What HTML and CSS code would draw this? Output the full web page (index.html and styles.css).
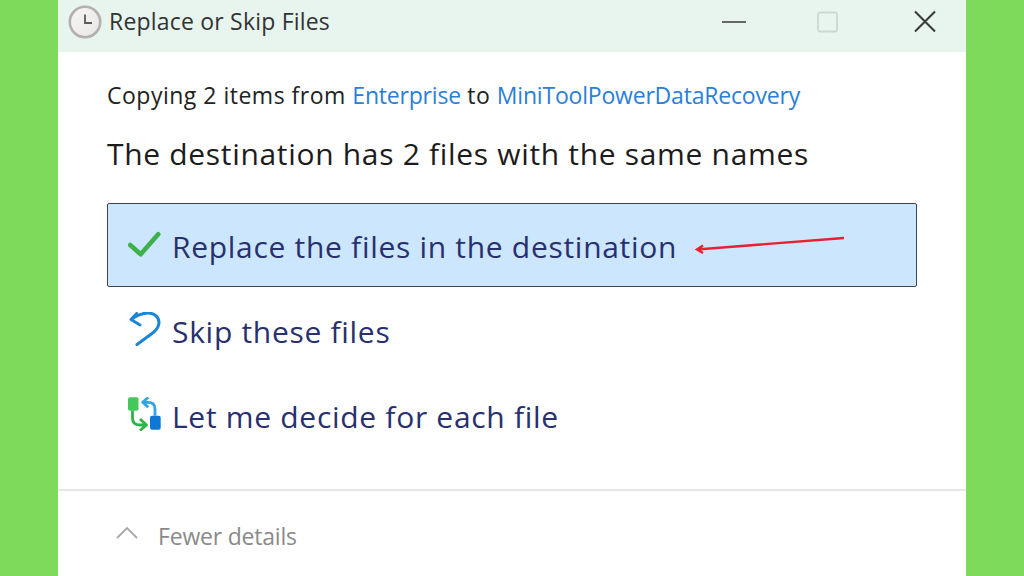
FILE: index.html
```html
<!DOCTYPE html>
<html lang="en">
<head>
<meta charset="utf-8">
<title>Replace or Skip Files</title>
<link rel="stylesheet" href="styles.css">
</head>
<body>
<main class="dialog">
  <header class="titlebar">
    <svg class="clock" viewBox="0 0 34 34" width="34" height="34">
      <defs><linearGradient id="face" x1="0" y1="0" x2="1" y2="1"><stop offset="0" stop-color="#f7f6f5"/><stop offset="1" stop-color="#e9e7e6"/></linearGradient></defs>
      <circle cx="17" cy="17" r="15.2" fill="url(#face)" stroke="#b3b0ae" stroke-width="2.600"/>
      <path d="M17 9.500V18h7" fill="none" stroke="#5a5a5a" stroke-width="1.800"/>
    </svg>
    <span class="title">Replace or Skip Files</span>
    <div class="controls">
      <svg class="ctl ctl-min" viewBox="0 0 24 24" width="24" height="24"><path d="M0 12h24" stroke="#444" stroke-width="1.600"/></svg>
      <svg class="ctl" viewBox="0 0 24 24" width="24" height="24"><rect x="3" y="2.500" width="19" height="19" rx="2" fill="none" stroke="#cfd5d2" stroke-width="1.800"/></svg>
      <svg class="ctl" viewBox="0 0 24 24" width="24" height="24"><path d="M2 1.500l20 20M22 1.500l-20 20" stroke="#3a3a3a" stroke-width="2.100"/></svg>
    </div>
  </header>
  <section class="content">
    <p class="copying">Copying 2 items from <span class="link">Enterprise</span> to <span class="link">MiniToolPowerDataRecovery</span></p>
    <h1 class="heading">The destination has 2 files with the same names</h1>
    <div class="options">
      <div class="option selected">
        <svg class="icon" viewBox="0 0 34 34" width="34" height="34"><path d="M2.200 18l10.500 9.300L30.200 7.300" fill="none" stroke="#3fb14a" stroke-width="4.600" stroke-linecap="round" stroke-linejoin="round"/></svg>
        <span>Replace the files in the destination</span>
        <svg class="arrow" viewBox="0 0 152 18" width="152" height="18"><path d="M150 2L3 13.500M9 9.500L3 13.500l6 3.500" fill="none" stroke="#e8202f" stroke-width="2.400"/></svg>
      </div>
      <div class="option">
        <svg class="icon" viewBox="0 0 34 34" width="34" height="34"><path d="M8.700 1.500L3 7.500l9 5.500M3 7.500C8 4 14 1 20 1C26 1 31 5 31 10.500C31 14 29 17 26 20L9 32.500" fill="none" stroke="#1a86d8" stroke-width="3" stroke-linecap="round" stroke-linejoin="round"/></svg>
        <span>Skip these files</span>
      </div>
      <div class="option">
        <svg class="icon" viewBox="0 0 34 34" width="34" height="34">
          <rect x="0" y="0.300" width="10.500" height="13.500" rx="2" fill="#43c85c"/>
          <path d="M4.500 13.700V21c0 5 2.500 7 7 7h7M12 22l6.500 6-6.500 5.500" fill="none" stroke="#2fb344" stroke-width="2.800" stroke-linejoin="round"/>
          <path d="M27 18.700V12c0-5-2.500-6.700-7-6.700h-5.300M20.300 0.300L14.700 5.300l5.600 5" fill="none" stroke="#2ea6e6" stroke-width="2.800" stroke-linejoin="round"/>
          <rect x="22" y="18.700" width="10.700" height="14" rx="2" fill="#0f78d4"/>
        </svg>
        <span>Let me decide for each file</span>
      </div>
    </div>
  </section>
  <footer class="footer">
    <svg class="chevron" viewBox="0 0 22 14" width="22" height="14"><path d="M1 12L11 2l10 10" fill="none" stroke="#a9a9a9" stroke-width="1.800"/></svg>
    <span>Fewer details</span>
  </footer>
</main>
</body>
</html>
```
FILE: styles.css
```css
* { box-sizing: border-box; }
html, body { margin: 0; height: 100%; }
body {
  background: #7eda5a;
  display: flex;
  justify-content: center;
  overflow: hidden;
  font-family: "Open Sans", "Noto Sans", sans-serif;
}
.dialog {
  width: 908px;
  height: 576px;
  background: #fff;
  display: flex;
  flex-direction: column;
}
.titlebar {
  height: 52px;
  flex: none;
  background: #e8f5ef;
  display: flex;
  align-items: center;
  padding: 0 29px 8px 10px;
  color: #333;
}
.clock { flex: none; }
.title { margin: 0 0 2px 7px; font-size: 23px; letter-spacing: 0.2px; }
.controls { margin-left: auto; display: flex; gap: 74px; }
.ctl-min { margin-right: -5px; }
.content { flex: 1; padding: 0 49px; }
.copying { margin: 28px 0 0; height: 30px; line-height: 30px; font-size: 23px; letter-spacing: 0.5px; color: #222; }
.link { color: #2a7fd8; letter-spacing: -0.2px; }
.heading { margin: 23px 0 0; height: 42px; line-height: 42px; font-size: 30px; letter-spacing: 0.68px; font-weight: 400; color: #1c1c1c; }
.options { margin-top: 28px; display: flex; flex-direction: column; }
.option {
  position: relative;
  height: 85px;
  display: flex;
  align-items: center;
  gap: 10px;
  padding: 2px 0 0 20px;
  font-size: 30px;
  letter-spacing: 0.7px;
  color: #28306e;
  border: 1px solid transparent;
}
.option .icon { flex: none; margin-bottom: 5px; }
.selected { height: 84px; margin-bottom: 1px; background: #cbe6fd; border-color: #3f4650; border-radius: 2px; }
.arrow { position: absolute; left: 586px; top: 32px; }
.footer {
  height: 87px;
  flex: none;
  border-top: 2px solid #e6e6e6;
  display: flex;
  align-items: center;
  gap: 20px;
  padding: 5px 0 0 58px;
  font-size: 23px;
  letter-spacing: -0.2px;
  color: #8a8a8a;
}
.chevron { margin-bottom: 6px; }
```
